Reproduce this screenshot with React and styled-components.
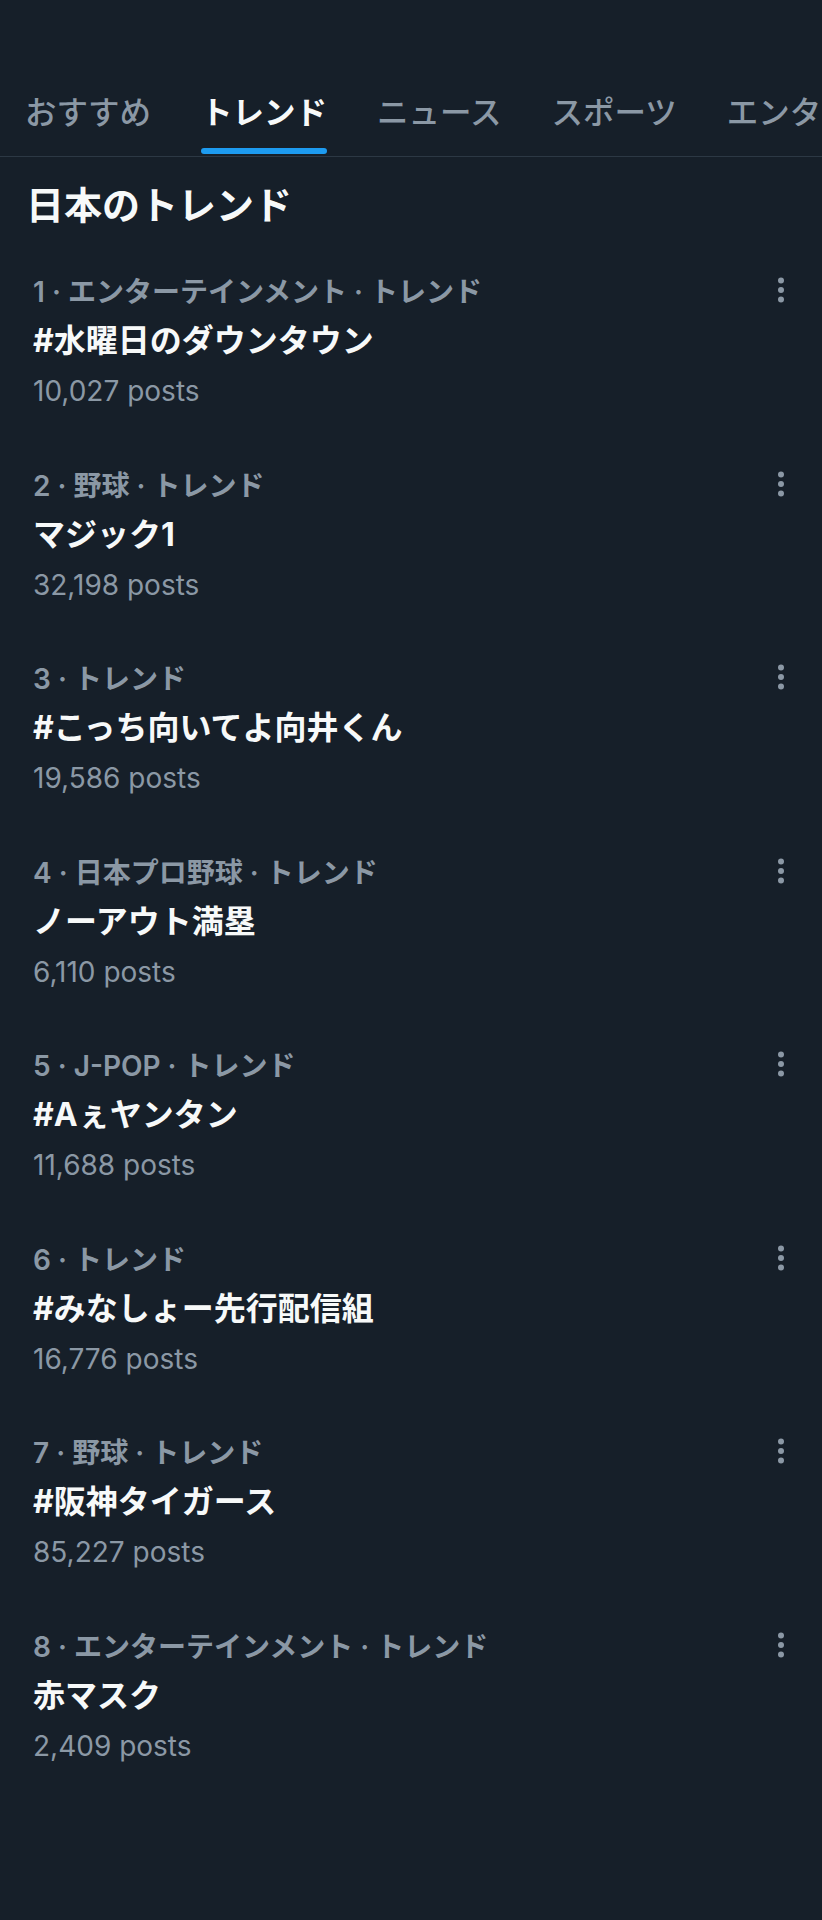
import React from "react";
import styled, { createGlobalStyle } from "styled-components";

const GlobalStyle = createGlobalStyle`
  html, body {
    margin: 0;
    padding: 0;
    background: #161f29;
  }
  body {
    font-family: Inter, "Noto Sans CJK JP", sans-serif;
    -webkit-font-smoothing: antialiased;
  }
`;

const Page = styled.div`
  width: 822px;
  min-height: 1920px;
  background: #161f29;
  overflow: hidden;
`;

const TabBar = styled.nav`
  display: flex;
  gap: 50px;
  padding: 88px 0 0 25px;
  border-bottom: 1px solid #2c3844;
  white-space: nowrap;
`;

const Tab = styled.div`
  display: flex;
  flex-direction: column;
  flex-shrink: 0;
`;

const TabLabel = styled.span`
  font-family: "Noto Sans CJK JP", sans-serif;
  font-size: 31.5px;
  line-height: 44px;
  font-weight: ${({ $active }) => ($active ? 700 : 500)};
  color: ${({ $active }) => ($active ? "#f7f9f9" : "#8b98a5")};
`;

const Indicator = styled.div`
  height: 6px;
  margin: 16px 0 2px;
  border-radius: 3px;
  background: ${({ $active }) => ($active ? "#1d9bf0" : "transparent")};
`;

const Heading = styled.h2`
  margin: 0;
  padding: 22px 26px 17px;
  font-family: "Noto Sans CJK JP", sans-serif;
  font-size: 38px;
  line-height: 48px;
  font-weight: 700;
  color: #f7f9f9;
`;

const Item = styled.div`
  display: flex;
  flex-direction: column;
  padding: 24px 37px 25.5px 33px;
`;

const MetaRow = styled.div`
  display: flex;
  align-items: center;
  justify-content: space-between;
  height: 44px;
`;

const Meta = styled.span`
  font-family: Inter, "Noto Sans CJK JP", sans-serif;
  font-size: 28px;
  font-weight: 600;
  color: #8b98a5;
`;

const Title = styled.div`
  font-family: Inter, "Noto Sans CJK JP", sans-serif;
  font-size: 32px;
  line-height: 58px;
  font-weight: 700;
  color: #f7f9f9;
`;

const Posts = styled.div`
  font-family: Inter, "Noto Sans CJK JP", sans-serif;
  font-size: 28px;
  line-height: 42px;
  color: #8b98a5;
`;

const MoreButton = styled.svg`
  width: 8px;
  height: 28px;
  flex-shrink: 0;
`;

const tabs = ["おすすめ", "トレンド", "ニュース", "スポーツ", "エンタメ"];

const trends = [
  { cat: "エンターテインメント", title: "#水曜日のダウンタウン", posts: "10,027" },
  { cat: "野球", title: "マジック1", posts: "32,198" },
  { cat: null, title: "#こっち向いてよ向井くん", posts: "19,586" },
  { cat: "日本プロ野球", title: "ノーアウト満塁", posts: "6,110" },
  { cat: "J-POP", title: "#Aぇヤンタン", posts: "11,688" },
  { cat: null, title: "#みなしょー先行配信組", posts: "16,776" },
  { cat: "野球", title: "#阪神タイガース", posts: "85,227" },
  { cat: "エンターテインメント", title: "赤マスク", posts: "2,409" },
];

function Dots() {
  return (
    <MoreButton viewBox="0 0 8 28">
      <circle cx="4" cy="4.5" r="3" fill="#8b98a5" />
      <circle cx="4" cy="14" r="3" fill="#8b98a5" />
      <circle cx="4" cy="23.5" r="3" fill="#8b98a5" />
    </MoreButton>
  );
}

export default function App() {
  return (
    <Page>
      <GlobalStyle />
      <TabBar>
        {tabs.map((t, i) => (
          <Tab key={t}>
            <TabLabel $active={i === 1}>{t}</TabLabel>
            <Indicator $active={i === 1} />
          </Tab>
        ))}
      </TabBar>
      <Heading>日本のトレンド</Heading>
      {trends.map((tr, i) => (
        <Item key={tr.title}>
          <MetaRow>
            <Meta>
              {i + 1} · {tr.cat ? `${tr.cat} · ` : ""}トレンド
            </Meta>
            <Dots />
          </MetaRow>
          <Title>{tr.title}</Title>
          <Posts>{tr.posts} posts</Posts>
        </Item>
      ))}
    </Page>
  );
}
